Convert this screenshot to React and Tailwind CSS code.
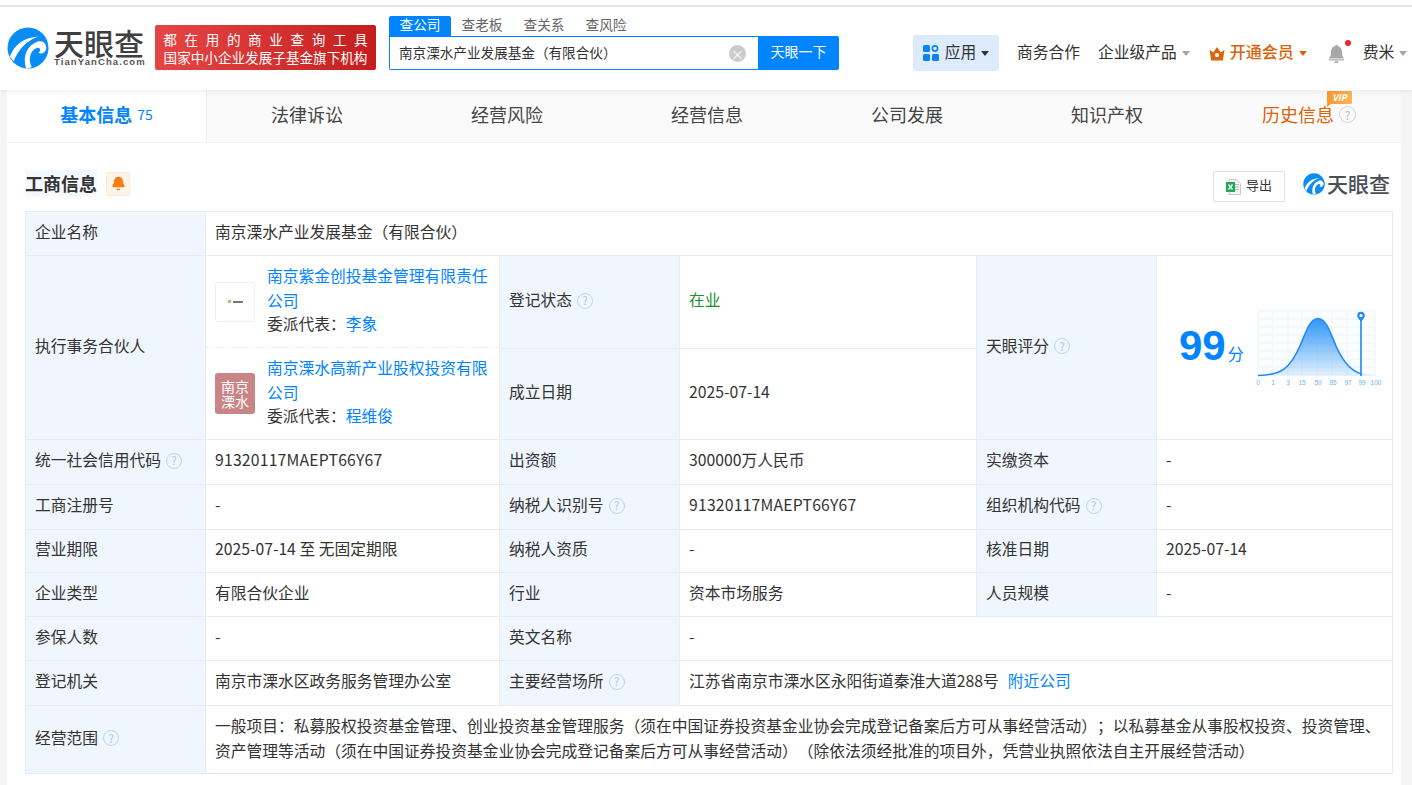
import React from 'react';
import { Bell } from 'lucide-react';

const font = { fontFamily: '"Noto Sans CJK SC", "Liberation Sans", sans-serif' };

const Help = () => (
  <span className="ml-[5px] inline-flex h-[16px] w-[16px] items-center justify-center rounded-full border-[1.5px] border-[#bcd6f0] text-[11px] leading-none text-[#a9c6e4] align-[1px]">?</span>
);

const Caret = ({ color = 'border-t-[#a6a6a6]' }) => (
  <span className={`ml-[5px] inline-block h-0 w-0 border-x-[4.5px] border-t-[5px] border-x-transparent ${color}`} />
);

const LogoMark = ({ size = 42 }) => (
  <svg width={size} height={size} viewBox="0 0 44 44" className="shrink-0">
    <circle cx="22" cy="22" r="21.5" fill="#0a8cf5" />
    <path d="M3 31C8 18 18 11 33 10 22 14 13 21 7 36z" fill="#fff" />
    <path d="M20 43.5C16 30 21 19 33 15c5-1 9 3 8 8-1 4-5 6-8 4 3-2 2-6-2-5-7 3-9 12-5 20-2 1-4 1.5-6 1.5z" fill="#fff" />
  </svg>
);

const BellSolid = () => (
  <svg width="17" height="19" viewBox="0 0 17 19">
    <path d="M7.2 2a1.3 1.3 0 0 1 2.6 0C13 2.8 14 5.5 14 8.5c0 2.5.6 4.5 2.2 6H.8C2.4 13 3 11 3 8.5 3 5.5 4 2.8 7.2 2z" fill="#a8a8a8" />
    <rect x="1" y="15.3" width="15" height="1.2" fill="#a8a8a8" />
    <path d="M6.5 17.2h4a2 2 0 0 1-4 0z" fill="#a8a8a8" />
  </svg>
);

const Label = ({ children, className = '', ...rest }) => (
  <td {...rest} className={`border border-[#e4edf5] bg-[#eff6fd] px-[9px] pb-[4px] align-middle ${className}`}>{children}</td>
);

const Value = ({ children, className = '', ...rest }) => (
  <td {...rest} className={`border border-[#e4edf5] bg-white px-[9px] pb-[4px] align-middle ${className}`}>{children}</td>
);

const Partner = ({ name, line2, rep, avatar }) => (
  <div className="flex items-center gap-3 px-[9px]">
    {avatar}
    <div className="w-[224px] pb-[4px] leading-[28px]">
      <div className="-mb-[3px] text-[#0084ff]">{name}</div>
      <div className="-mb-[5px] text-[#0084ff]">{line2}</div>
      <div className="text-[#333]">委派代表：<span className="text-[#0084ff]">{rep}</span></div>
    </div>
  </div>
);

const Chart = () => (
  <svg width="128" height="78" viewBox="0 0 128 78" className="shrink-0 overflow-visible">
    <defs>
      <linearGradient id="bellFill" x1="0" y1="0" x2="0" y2="1">
        <stop offset="0" stopColor="#2f95f8" stopOpacity="1" />
        <stop offset="1" stopColor="#2f95f8" stopOpacity="0.12" />
      </linearGradient>
    </defs>
    <rect x="6" y="1" width="117" height="65" fill="#fbfdff" />
    {[1, 9, 17, 25, 33, 41, 49, 57, 65].map((y) => (
      <line key={y} x1="6" x2="123" y1={y} y2={y} stroke="#eef4fa" />
    ))}
    {[6, 21, 36, 50, 65, 80, 95, 109, 123].map((x) => (
      <line key={x} x1={x} x2={x} y1="1" y2="66" stroke="#eef4fa" />
    ))}
    <path d="M6 65.5C30 65 38 58 48 36 54 22 58 8.5 66 8.5S78 22 84 36c10 22 20 27 39 29.5z" fill="url(#bellFill)" />
    <path d="M6 65.5C30 65 38 58 48 36 54 22 58 8.5 66 8.5S78 22 84 36c8 18 17 26 26 28" fill="none" stroke="#1f8bf5" strokeWidth="1.6" />
    <line x1="109" x2="109" y1="8" y2="66" stroke="#1f8bf5" strokeWidth="1.6" />
    <path d="M109 12c-2-3-3.8-4.500-3.8-6.500a3.800 3.800 0 0 1 7.600 0c0 2-1.800 3.500-3.800 6.500z" fill="#1f8bf5" />
    <circle cx="109" cy="5.5" r="1.5" fill="#fff" />
    <g fill="#6fb0ee" fontSize="6.5" textAnchor="middle" fontFamily="Liberation Sans, sans-serif">
      {[['0', 6], ['1', 21], ['3', 36], ['15', 50], ['50', 66], ['85', 81], ['97', 96], ['99', 110], ['100', 124]].map(([t, x]) => (
        <text key={t} x={x} y="74.5">{t}</text>
      ))}
    </g>
  </svg>
);

const navTabs = ['法律诉讼', '经营风险', '经营信息', '公司发展', '知识产权'];

const App = () => (
  <div style={font} className="h-[785px] w-[1412px] overflow-hidden bg-[#f5f5f5] text-[#333] [text-spacing-trim:space-all]">
    <header className="relative z-10 h-[90px] bg-white shadow-[0_2px_6px_rgba(0,0,0,0.06)]">
      <div className="h-[5px]" />
      <div className="h-[2px] bg-[#e6e6e6]" />
      <div className="flex items-start pl-[7px] pt-[9px]">
        <div className="mt-[11px] flex gap-[5px]">
          <LogoMark />
          <div className="w-[92px]">
            <div className="text-[30px] font-medium leading-[30px] text-[#3f3f3f]">天眼查</div>
            <div className="text-[9.5px] font-bold leading-[10px] tracking-[1.1px] text-[#555]" style={{ fontFamily: '"Liberation Sans", sans-serif' }}>TianYanCha.com</div>
          </div>
        </div>
        <div className="ml-[9px] mt-[9px] flex h-[45px] w-[221px] flex-col items-center justify-center rounded-[2px] bg-gradient-to-r from-[#e64545] to-[#c41d1d] text-white">
          <div className="mr-[-7.6px] text-[13.6px] leading-[18px] tracking-[7.6px]">都在用的商业查询工具</div>
          <div className="text-[13.6px] leading-[18px]">国家中小企业发展子基金旗下机构</div>
        </div>
        <div className="ml-[13px]">
          <div className="flex h-[20px] items-center text-[13.7px] text-[#666]">
            <span className="flex h-full w-[62px] items-center justify-center rounded-t-[2px] bg-[#0084ff] pb-[3px] text-white">查公司</span>
            <span className="mb-[3px] ml-[10px] w-[42px] whitespace-nowrap text-center">查老板</span>
            <span className="mb-[3px] ml-[20px] w-[42px] whitespace-nowrap text-center">查关系</span>
            <span className="mb-[3px] ml-[20px] w-[42px] whitespace-nowrap text-center">查风险</span>
          </div>
          <div className="flex h-[34px] w-[450px]">
            <div className="flex flex-1 items-center justify-between rounded-bl-[2px] border border-r-0 border-[#0084ff] pl-[9px] pr-[12px] text-[13.6px] text-[#333]">
              <span className="mb-[2px]">南京溧水产业发展基金（有限合伙）</span>
              <span className="flex h-[17px] w-[17px] items-center justify-center rounded-full bg-[#cccccc] text-[13px] leading-none text-white">×</span>
            </div>
            <div className="flex w-[81px] items-center justify-center rounded-r-[2px] bg-[#0084ff] pb-[3px] text-[14px] text-white">天眼一下</div>
          </div>
        </div>
        <div className="ml-[74px] mt-[19px] flex h-[36px] items-center text-[15.75px] text-[#333]">
          <div className="flex h-full w-[86px] items-center justify-center rounded-[2px] bg-[#dcecfd]">
            <svg width="16" height="16" viewBox="0 0 16 16" className="mr-[6px]">
              <rect x="0" y="0" width="7" height="7" rx="1.5" fill="#0a84f5" />
              <circle cx="12" cy="3.5" r="2.6" fill="none" stroke="#0a84f5" strokeWidth="1.6" />
              <rect x="0" y="9" width="7" height="7" rx="1.5" fill="#0a84f5" />
              <rect x="9" y="9" width="7" height="7" rx="1.5" fill="#0a84f5" />
            </svg>
            <span className="mb-[2px]">应用</span>
            <Caret color="border-t-[#333]" />
          </div>
          <span className="ml-[18px] mb-[2px]">商务合作</span>
          <span className="ml-[18px] mb-[2px]">企业级产品</span>
          <Caret />
          <span className="ml-[19px] flex items-center text-[16px] font-medium text-[#d8640c]">
            <svg width="16" height="15" viewBox="0 0 15 14" className="mr-[5px]">
              <path d="M0.5 3.5 4 6l3.5-5L11 6l3.5-2.5-1.500 10H2z" fill="#d8640c" />
              <circle cx="7.5" cy="8.5" r="2" fill="#fff" />
            </svg>
            <span className="mb-[4px]">开通会员</span>
            <Caret color="border-t-[#d8640c]" />
          </span>
          <span className="relative ml-[21px] flex">
            <BellSolid />
            <span className="absolute -right-[6px] -top-[4px] h-[6px] w-[6px] rounded-full bg-[#f5222d]" />
          </span>
          <span className="ml-[18px] mb-[2px] whitespace-nowrap">费米</span>
          <Caret />
        </div>
      </div>
    </header>

    <main className="ml-[7px] h-[695px] w-[1394px] bg-white">
      <nav className="flex h-[53px] items-stretch border-b border-[#f3f3f3] bg-[#fafafa] text-[18px] text-[#444]">
        <div className="flex w-[200px] items-center justify-center border-r border-[#f0f0f0] bg-white pb-[4px]">
          <span className="font-bold text-[#0084ff]">基本信息</span>
          <span className="ml-[5px] text-[14px] text-[#0084ff]">75</span>
        </div>
        {navTabs.map((t) => (
          <div key={t} className="flex w-[200px] items-center justify-center pb-[4px]">{t}</div>
        ))}
        <div className="relative flex w-[194px] items-center pb-[4px] pl-[55px] text-[#d8640c]">
          历史信息
          <span className="ml-[5px] mt-[1px] flex h-[17px] w-[17px] items-center justify-center rounded-full border-[1.5px] border-[#d0d4d9] text-[12px] leading-none text-[#b8bcc2]">?</span>
          <span className="absolute left-[120px] top-[1px] flex h-[13px] w-[25px] items-center justify-center rounded-[1px] bg-gradient-to-r from-[#f79a2e] to-[#fbb558] text-[9px] font-bold italic leading-none text-white">VIP</span>
          <span className="absolute left-[120px] top-[14px] h-0 w-0 border-r-[4px] border-t-[3px] border-r-transparent border-t-[#f79a2e]" />
        </div>
      </nav>

      <section className="pl-[18px] pr-[9px] pt-[27px]">
        <div className="flex h-[41px] items-start justify-between pr-[2px]">
          <div className="flex items-center gap-[9px]">
            <h2 className="bg-[#f5f9fe] text-[18px] font-bold leading-[27px] text-[#333]">工商信息</h2>
            <span className="flex h-[24px] w-[24px] items-center justify-center rounded-[2px] border border-[#fde6d2] bg-[#fff4ea]">
              <Bell size={15} fill="#ff7a0f" stroke="#ff7a0f" />
            </span>
          </div>
          <div className="flex items-center pt-[1px]">
            <div className="flex h-[31px] w-[72px] items-center justify-center rounded-[2px] border border-[#e0e0e0] text-[13px] text-[#333]">
              <svg width="15" height="16" viewBox="0 0 15 16" className="mr-[5px]">
                <path d="M3 .5h7.5L14.5 4.5V15.5H3z" fill="#f4f4f4" stroke="#c8c8c8" />
                <path d="M9 5.5h4M9 8h4M9 10.5h4" stroke="#bbb" />
                <rect x="0" y="3" width="9" height="10" fill="#1fa85a" />
                <path d="M2.5 5.5 6.5 10.5M6.5 5.5 2.5 10.5" stroke="#fff" strokeWidth="1.3" />
              </svg>
              <span className="mb-[3px]">导出</span>
            </div>
            <div className="mb-[5px] ml-[18px] flex items-center gap-[2px]">
              <LogoMark size={22} />
              <span className="mb-[1px] text-[21px] font-medium leading-none text-[#4a4f55]">天眼查</span>
            </div>
          </div>
        </div>

        <table className="w-[1367px] table-fixed border-collapse text-[15.75px] text-[#333]">
          <colgroup>
            <col className="w-[180px]" />
            <col className="w-[294px]" />
            <col className="w-[180px]" />
            <col className="w-[297px]" />
            <col className="w-[180px]" />
            <col className="w-[236px]" />
          </colgroup>
          <tbody>
            <tr className="h-[44px]">
              <Label>企业名称</Label>
              <Value colSpan={5}>南京溧水产业发展基金（有限合伙）</Value>
            </tr>
            <tr className="h-[93px]">
              <Label rowSpan={2}>执行事务合伙人</Label>
              <Value className="!border-b-0 !p-0">
                <div className="flex h-[92px] items-center border-b border-dashed border-[#e4edf5]">
                  <Partner
                    name="南京紫金创投基金管理有限责任"
                    line2="公司"
                    rep="李象"
                    avatar={
                      <span className="flex h-[40px] w-[40px] shrink-0 items-center justify-center gap-[2px] rounded-[3px] border border-[#eeeeee] bg-white">
                        <span className="h-[3px] w-[3px] bg-[#d9b262]" />
                        <span className="h-[2px] w-[10px] bg-[#777]" />
                      </span>
                    }
                  />
                </div>
              </Value>
              <Label>登记状态<Help /></Label>
              <Value className="text-[#1a8f2c]">在业</Value>
              <Label rowSpan={2}>天眼评分<Help /></Label>
              <Value rowSpan={2} className="!p-0">
                <div className="flex items-center pl-[22px]">
                  <span className="mb-[3px] text-[42px] font-bold leading-none text-[#0084ff]" style={{ fontFamily: '"Liberation Sans", sans-serif' }}>99</span>
                  <span className="ml-[2px] mt-[10px] text-[16px] text-[#0084ff]">分</span>
                  <span className="ml-[8px] mt-[3px]"><Chart /></span>
                </div>
              </Value>
            </tr>
            <tr className="h-[91px]">
              <Value className="!border-t-0 !p-0">
                <Partner
                  name="南京溧水高新产业股权投资有限"
                  line2="公司"
                  rep="程维俊"
                  avatar={
                    <span className="flex h-[41px] w-[40px] shrink-0 items-center justify-center rounded-[3px] bg-[#c98585] text-center text-[14px] leading-[15px] text-white">南京<br />溧水</span>
                  }
                />
              </Value>
              <Label>成立日期</Label>
              <Value>2025-07-14</Value>
            </tr>
            <tr className="h-[45px]">
              <Label>统一社会信用代码<Help /></Label>
              <Value className="tracking-[0.2px]">91320117MAEPT66Y67</Value>
              <Label>出资额</Label>
              <Value>300000万人民币</Value>
              <Label>实缴资本</Label>
              <Value>-</Value>
            </tr>
            <tr className="h-[45px]">
              <Label>工商注册号</Label>
              <Value>-</Value>
              <Label>纳税人识别号<Help /></Label>
              <Value className="tracking-[0.2px]">91320117MAEPT66Y67</Value>
              <Label>组织机构代码<Help /></Label>
              <Value>-</Value>
            </tr>
            <tr className="h-[43px]">
              <Label>营业期限</Label>
              <Value>2025-07-14 至 无固定期限</Value>
              <Label>纳税人资质</Label>
              <Value>-</Value>
              <Label>核准日期</Label>
              <Value>2025-07-14</Value>
            </tr>
            <tr className="h-[44px]">
              <Label>企业类型</Label>
              <Value>有限合伙企业</Value>
              <Label>行业</Label>
              <Value>资本市场服务</Value>
              <Label>人员规模</Label>
              <Value>-</Value>
            </tr>
            <tr className="h-[44px]">
              <Label>参保人数</Label>
              <Value>-</Value>
              <Label>英文名称</Label>
              <Value colSpan={3}>-</Value>
            </tr>
            <tr className="h-[45px]">
              <Label>登记机关</Label>
              <Value>南京市溧水区政务服务管理办公室</Value>
              <Label>主要经营场所<Help /></Label>
              <Value colSpan={3}>江苏省南京市溧水区永阳街道秦淮大道288号<span className="ml-[9px] text-[#0084ff]">附近公司</span></Value>
            </tr>
            <tr className="h-[68px]">
              <Label>经营范围<Help /></Label>
              <Value colSpan={5} className="leading-[25px]">
                <div className="whitespace-nowrap">一般项目：私募股权投资基金管理、创业投资基金管理服务（须在中国证券投资基金业协会完成登记备案后方可从事经营活动）；以私募基金从事股权投资、投资管理、</div>
                <div className="whitespace-nowrap">资产管理等活动（须在中国证券投资基金业协会完成登记备案后方可从事经营活动）（除依法须经批准的项目外，凭营业执照依法自主开展经营活动）</div>
              </Value>
            </tr>
          </tbody>
        </table>
      </section>
    </main>
  </div>
);

export default App;
